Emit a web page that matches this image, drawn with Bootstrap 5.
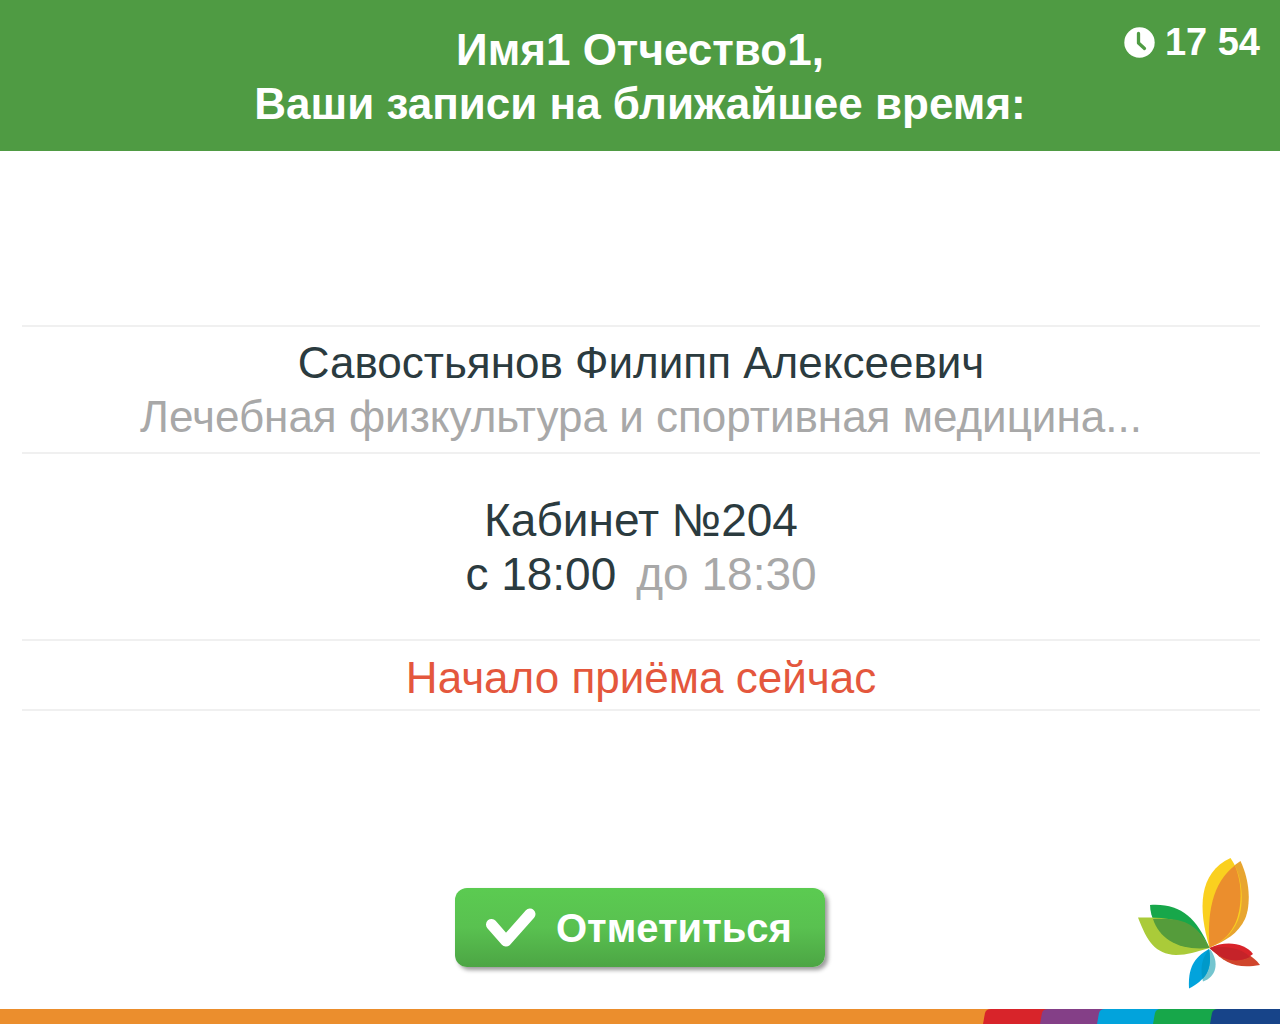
<!DOCTYPE html>
<html lang="ru">
<head>
<meta charset="utf-8">
<meta name="viewport" content="width=device-width, initial-scale=1">
<title>Ваши записи</title>
<link href="https://cdn.jsdelivr.net/npm/bootstrap@5.3.0/dist/css/bootstrap.min.css" rel="stylesheet">
<style>
body{font-family:"Liberation Sans",Arial,sans-serif;font-size:44px;line-height:54px;color:#2b3b3f;background:#fff}
.top-bar{background:#4f9b43;padding:23px 20px 20px}
.top-bar h1{font-size:44px;line-height:54px;font-weight:700}
.clock{top:22px;right:20px;font-size:38px;line-height:40px;gap:10px;font-weight:700}
.visit-list{padding:174px 20px 0 22px}
.visit-part{border-top:2px solid #f0f0f0}
.visit-part:last-child{border-bottom:2px solid #f0f0f0}
.visit-who{padding:9px 0 8px}
.visit-where{padding:39px 0 38px;font-size:46px}
.visit-where p+p{gap:20px}
.visit-soon{padding:10px 0 4px;color:#e4573d}
.muted-text{color:#a8a8a8}
.actions{padding:0 20px 20px}
.btn-checkin{--bs-btn-color:#fff;--bs-btn-hover-color:#fff;--bs-btn-active-color:#fff;--bs-btn-border-width:0;width:370px;height:79px;margin-bottom:22px;padding:0 0 0 30px;gap:19px;border-radius:12px;font-size:40px;line-height:54px;font-weight:700;background:linear-gradient(#5bcb51,#59c150 50%,#4ca544);box-shadow:3px 3px 4px #0006}
</style>
<script src="https://cdn.jsdelivr.net/npm/bootstrap@5.3.0/dist/js/bootstrap.bundle.min.js" defer></script>
</head>
<body class="min-vh-100 d-flex flex-column text-center">
<header class="top-bar text-white position-relative">
  <h1 class="m-0">Имя1 Отчество1,<br>Ваши записи на ближайшее время:</h1>
  <div class="clock position-absolute d-flex align-items-center">
    <svg width="31" height="31" viewBox="0 0 31 31" aria-hidden="true"><circle cx="15.5" cy="15.500" r="15.200" fill="#fff"/><path d="M14.500 6.500V16L20.500 21.500" fill="none" stroke="#4f9b43" stroke-width="3.300" stroke-linecap="round" stroke-linejoin="round"/></svg>
    <time>17 54</time>
  </div>
</header>
<main class="flex-grow-1 d-flex flex-column justify-content-between">
  <div class="visit-list">
    <section class="visit-part visit-who">
      <p class="m-0">Савостьянов Филипп Алексеевич</p>
      <p class="m-0 muted-text">Лечебная физкультура и спортивная медицина...</p>
    </section>
    <section class="visit-part visit-where">
      <p class="m-0">Кабинет №204</p>
      <p class="m-0 d-flex justify-content-center"><span>с 18:00</span><span class="muted-text">до 18:30</span></p>
    </section>
    <section class="visit-part visit-soon"><p class="m-0">Начало приёма сейчас</p></section>
  </div>
  <div class="actions row g-0 align-items-end">
    <div class="col"></div>
    <div class="col-auto">
      <button type="button" class="btn btn-checkin d-flex align-items-center">
        <svg width="52" height="42" viewBox="0 0 52 42" aria-hidden="true"><path d="M6.500 17.500L21 34L45 7" fill="none" stroke="#fff" stroke-width="11" stroke-linecap="round" stroke-linejoin="round"/></svg>
        <span>Отметиться</span>
      </button>
    </div>
    <div class="col d-flex justify-content-end">
      <svg width="122" height="132" viewBox="1138 857 122 132" role="img" aria-label="Логотип">
        <path d="M1240.500 861C1250 881 1251 905 1245 919C1238 934 1225 941 1209.500 947.500C1207 906 1215 877 1240.500 861Z" fill="#e8a52f"/>
        <path d="M1230.500 858C1242 874 1245 902 1238 920C1232 935 1222 942 1209.500 947.500C1198 909 1198 873 1230.500 858Z" fill="#fad01f"/>
        <path d="M1234.800 865.500C1243 884 1242 909 1235 924C1228 938 1219 943 1209.500 947.500C1207 914 1212 883 1234.800 865.500Z" fill="#eb8e2d"/>
        <path d="M1150 905C1180 903 1196 917 1209.500 948C1175 950 1151 932 1150 905Z" fill="#17a74a"/>
        <path d="M1138 917.500C1176 917 1196 921 1209.500 948C1195 952 1188 955 1176 955C1155 954 1147 941 1138 917.500Z" fill="#aacb39"/>
        <path d="M1153 919C1184 917 1197 924 1209.500 948C1180 951 1160 940 1153 919Z" fill="#559c3b"/>
        <path d="M1211 948C1230 942 1251 953 1260 965C1238 969 1224 964 1211 948Z" fill="#d0452c"/>
        <path d="M1209.500 948C1226 940 1245 943 1253 954C1242 963 1228 964 1209.500 948Z" fill="#d8242a"/>
        <path d="M1209.500 948C1225 945 1242 948 1250 957C1235 963 1223 961 1209.500 948Z" fill="#c52329"/>
        <path d="M1210 949C1220 963 1216 977 1203 981.500C1199 968 1203 958 1210 949Z" fill="#74c5cf"/>
        <path d="M1209 949C1213 970 1205 980 1189 988.500C1188 969 1193 958 1209 949Z" fill="#02a3dc"/>
        <path d="M1209 949C1211 961 1210 971 1202.500 979C1200 968 1202 958 1209 949Z" fill="#0099c9"/>
      </svg>
    </div>
  </div>
</main>
<footer>
  <svg class="d-block w-100" height="15" aria-hidden="true">
    <rect width="100%" height="15" fill="#eb8e2d"/>
    <svg x="100%" width="300" height="15" overflow="visible">
      <path d="M-297 15L-295 4Q-294 0-289 0H0V15Z" fill="#d8242a"/>
      <path d="M-240 15L-238 4Q-237 0-232 0H0V15Z" fill="#843f87"/>
      <path d="M-183 15L-181 4Q-180 0-175 0H0V15Z" fill="#02a3dc"/>
      <path d="M-127 15L-125 4Q-124 0-119 0H0V15Z" fill="#17a74a"/>
      <path d="M-70 15L-68 4Q-67 0-62 0H0V15Z" fill="#174489"/>
    </svg>
  </svg>
</footer>
</body>
</html>
